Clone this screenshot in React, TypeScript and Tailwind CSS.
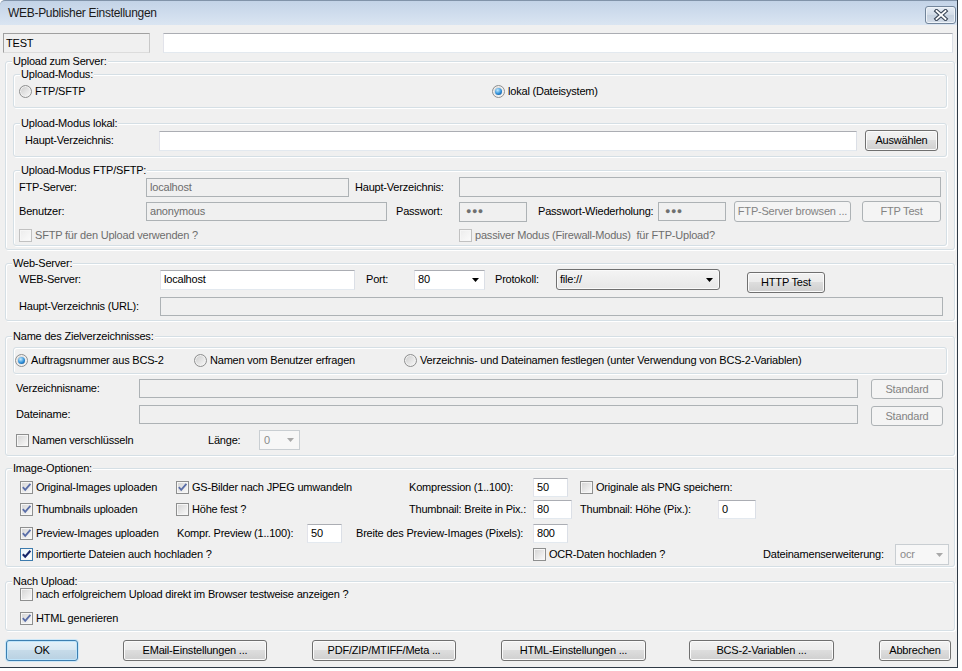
import React from "react";

type Kids = { children?: React.ReactNode };

function Group({ title, className, children }: { title?: string; className: string } & Kids) {
  return (
    <div
      className={`border border-[#d5dfe5] rounded-[3px] shadow-[inset_1px_1px_0_#ffffff,1px_1px_0_#ffffff] flex flex-col shrink-0 ${className}`}
    >
      {title && (
        <div className="-mt-[8px] ml-[6px] px-[1px] h-[14px] leading-[14px] w-fit bg-[#f0f0f0] whitespace-nowrap">
          {title}
        </div>
      )}
      {children}
    </div>
  );
}

function Input({ cls, value, disabled, dots }: { cls: string; value?: string; disabled?: boolean; dots?: boolean }) {
  const st = disabled
    ? "bg-[#f0f0f0] border-[#adb2b5] text-[#6d6d6d]"
    : "bg-white border-[#e3e9ef] border-t-[#abadb3] border-l-[#e2e3ea] border-r-[#dbdfe6] text-black";
  return (
    <div className={`border flex items-center pl-[3px] whitespace-nowrap shrink-0 ${st} ${cls}`}>
      {dots ? <span className="text-[9px] tracking-[0.5px] pl-[3px] text-[#707070]">●●●</span> : value}
    </div>
  );
}

function Btn({ label, cls, disabled, def }: { label: string; cls: string; disabled?: boolean; def?: boolean }) {
  const st = disabled
    ? "border-[#adb2b5] bg-[#f4f4f4] text-[#838383]"
    : def
    ? "border-[#3c7fb1] bg-[linear-gradient(#e5f1f9_0%,#d7e7f2_50%,#c6dbe9_50%,#b9d1e2_100%)] shadow-[inset_0_0_0_1px_#bfe4fa,0_0_0_1px_#cde7f7]"
    : "border-[#707070] bg-[linear-gradient(#f2f2f2_0%,#ebebeb_50%,#dddddd_50%,#cfcfcf_100%)] shadow-[inset_0_0_0_1px_#fbfbfb]";
  return (
    <button
      type="button"
      className={`rounded-[3px] border flex items-center justify-center shrink-0 whitespace-nowrap ${st} ${cls}`}
    >
      {label}
    </button>
  );
}

function Arrow({ color = "#000" }: { color?: string }) {
  return (
    <svg width="7" height="4" viewBox="0 0 7 4" className="shrink-0">
      <path d="M0 0 H7 L3.5 4 Z" fill={color} />
    </svg>
  );
}

function Select({ cls, value, variant }: { cls: string; value: string; variant: "edit" | "list" | "disabled" }) {
  if (variant === "list")
    return (
      <div
        className={`rounded-[3px] border border-[#707070] bg-[linear-gradient(#f4f4f4,#e8e8e8)] shadow-[inset_0_0_0_1px_#fafafa] flex items-center justify-between pl-[3px] pr-[6px] shrink-0 ${cls}`}
      >
        <span>{value}</span>
        <Arrow />
      </div>
    );
  if (variant === "disabled")
    return (
      <div
        className={`border border-[#c9ced2] bg-[#f7f7f7] flex items-center justify-between pl-[4px] pr-[5px] shrink-0 text-[#8a8a8a] ${cls}`}
      >
        <span>{value}</span>
        <Arrow color="#a9a9a9" />
      </div>
    );
  return (
    <div
      className={`border bg-white border-[#e3e9ef] border-t-[#abadb3] border-l-[#e2e3ea] border-r-[#dbdfe6] flex items-center justify-between pl-[3px] pr-[5px] shrink-0 ${cls}`}
    >
      <span>{value}</span>
      <Arrow />
    </div>
  );
}

function Check({ checked, disabled, hot }: { checked?: boolean; disabled?: boolean; hot?: boolean }) {
  const box = disabled
    ? "border-[#c1c1c1] bg-[linear-gradient(135deg,#ececec,#fbfbfb)]"
    : hot
    ? "border-[#3d7bad] bg-[linear-gradient(135deg,#e5f4fc,#ffffff)]"
    : "border-[#8e8f8f] bg-[linear-gradient(135deg,#d3d3d3,#fbfbfb)]";
  return (
    <span className={`w-[13px] h-[13px] shrink-0 border flex items-center justify-center shadow-[inset_0_0_0_1px_#f6f6f6] ${box}`}>
      {checked && (
        <svg width="11" height="11" viewBox="0 0 11 11">
          <path
            d="M1.8 5.2 L4.2 7.8 L9.4 1.8"
            fill="none"
            stroke={hot ? "#15246a" : "#5a6ea8"}
            strokeWidth={hot ? 2.1 : 1.8}
          />
        </svg>
      )}
    </span>
  );
}

function Radio({ checked }: { checked?: boolean }) {
  return (
    <span className="w-[13px] h-[13px] rounded-full border border-[#8e8f8f] bg-[linear-gradient(135deg,#cbcbcb,#fafafa)] shadow-[inset_0_0_0_1px_#f2f2f2] flex items-center justify-center shrink-0">
      {checked && (
        <span className="w-[7px] h-[7px] rounded-full bg-[radial-gradient(circle_at_38%_32%,#c4ebff,#2e8fd8_55%,#0c3c78)]" />
      )}
    </span>
  );
}

function CL({ label, checked, disabled, hot, cls = "" }: { label: string; checked?: boolean; disabled?: boolean; hot?: boolean; cls?: string }) {
  return (
    <div className={`flex items-center gap-[3px] whitespace-pre shrink-0 ${disabled ? "text-[#6d6d6d]" : ""} ${cls}`}>
      <Check checked={checked} disabled={disabled} hot={hot} />
      <span>{label}</span>
    </div>
  );
}

function RL({ label, checked, cls = "" }: { label: string; checked?: boolean; cls?: string }) {
  return (
    <div className={`flex items-center gap-[3px] whitespace-nowrap shrink-0 ${cls}`}>
      <Radio checked={checked} />
      <span>{label}</span>
    </div>
  );
}

function L({ children, cls = "" }: { cls?: string } & Kids) {
  return <div className={`whitespace-nowrap shrink-0 ${cls}`}>{children}</div>;
}

function CloseBtn() {
  return (
    <div className="mt-[5px] mr-[1px] w-[31px] h-[18px] rounded-[3px] border border-[#72859b] bg-[linear-gradient(#e6edf5,#d2dce8_50%,#c5d1df_50%,#d3dce8)] shadow-[inset_0_0_0_1px_#eef3f8] flex items-center justify-center">
      <svg width="16" height="12" viewBox="0 0 16 12">
        <path d="M3.5 2 L12.5 10 M12.5 2 L3.5 10" stroke="#3a4657" strokeWidth="4" strokeLinecap="square" />
        <path d="M3.5 2 L12.5 10 M12.5 2 L3.5 10" stroke="#ffffff" strokeWidth="1.8" strokeLinecap="square" />
      </svg>
    </div>
  );
}

export default function App() {
  return (
    <div className="w-[962px] h-[671px] bg-white font-['Liberation_Sans',Arial,sans-serif] text-[11px] leading-[13px] tracking-[-0.2px] text-black">
      <div className="w-[958px] h-[668px] border-r border-b border-[#2f3a46] flex flex-col">
        {/* Title bar */}
        <div className="h-[25px] shrink-0 flex justify-between items-start bg-[linear-gradient(#c3d3e7,#dae5f2)] rounded-tl-[5px] border-t border-[#8193a9]">
          <div className="pl-[8px] pt-[5px] text-[12px] leading-[15px] tracking-[-0.3px] text-[#1b1b1b]">
            WEB-Publisher Einstellungen
          </div>
          <CloseBtn />
        </div>

        {/* Client */}
        <div className="flex-1 bg-[#f0f0f0] flex flex-col">
          {/* TEST row */}
          <div className="mt-[8px] flex h-[20px] shrink-0">
            <div className="ml-[3px] w-[147px] h-[20px] border border-[#a0a0a0] border-b-[#dcdcdc] border-r-[#c8c8c8] flex items-center pl-[2px]">
              TEST
            </div>
            <Input cls="ml-[13px] w-[790px] h-[20px]" />
          </div>

          {/* Upload zum Server */}
          <Group title="Upload zum Server:" className="mt-[8px] ml-[5px] w-[950px] h-[189px]">
            <Group title="Upload-Modus:" className="mt-[6px] ml-[7px] w-[934px] h-[34px]">
              <div className="mt-[4px] ml-[5px] flex items-center h-[13px]">
                <RL label="FTP/SFTP" cls="w-[473px]" />
                <RL label="lokal (Dateisystem)" checked />
              </div>
            </Group>
            <Group title="Upload-Modus lokal:" className="mt-[15px] ml-[7px] w-[934px] h-[34px]">
              <div className="flex items-center h-[21px]">
                <L cls="ml-[11px] w-[134px]">Haupt-Verzeichnis:</L>
                <Input cls="w-[698px] h-[20px]" />
                <Btn label="Auswählen" cls="ml-[8px] w-[73px] h-[21px]" />
              </div>
            </Group>
            <Group title="Upload-Modus FTP/SFTP:" className="mt-[13px] ml-[7px] w-[934px] h-[76px]">
              <div className="flex items-center h-[20px]">
                <L cls="ml-[5px] w-[127px]">FTP-Server:</L>
                <Input cls="w-[203px] h-[19px]" value="localhost" disabled />
                <L cls="w-[110px] pl-[6px]">Haupt-Verzeichnis:</L>
                <Input cls="w-[482px] h-[20px]" disabled />
              </div>
              <div className="mt-[4px] flex items-center h-[21px]">
                <L cls="ml-[5px] w-[127px]">Benutzer:</L>
                <Input cls="w-[241px] h-[19px]" value="anonymous" disabled />
                <L cls="w-[72px] pl-[9px]">Passwort:</L>
                <Input cls="w-[68px] h-[20px]" disabled dots />
                <L cls="w-[131px] pl-[11px]">Passwort-Wiederholung:</L>
                <Input cls="w-[68px] h-[19px]" disabled dots />
                <Btn label="FTP-Server browsen ..." cls="ml-[8px] w-[117px] h-[21px]" disabled />
                <Btn label="FTP Test" cls="ml-[11px] w-[79px] h-[21px]" disabled />
              </div>
              <div className="mt-[7px] ml-[5px] flex items-center h-[13px]">
                <CL label="SFTP für den Upload verwenden ?" disabled cls="w-[440px]" />
                <CL label="passiver Modus (Firewall-Modus)  für FTP-Upload?" disabled />
              </div>
            </Group>
          </Group>

          {/* Web-Server */}
          <Group title="Web-Server:" className="mt-[13px] ml-[5px] w-[950px] h-[58px]">
            <div className="-mt-[1px] flex items-center h-[21px]">
              <L cls="ml-[13px] w-[141px]">WEB-Server:</L>
              <Input cls="w-[195px] h-[20px]" value="localhost" />
              <L cls="w-[59px] pl-[11px]">Port:</L>
              <Select cls="w-[71px] h-[20px]" value="80" variant="edit" />
              <L cls="w-[71px] pl-[10px]">Protokoll:</L>
              <Select cls="w-[164px] h-[21px]" value="file://" variant="list" />
              <Btn label="HTTP Test" cls="ml-[27px] w-[78px] h-[21px] self-start mt-[3px]" />
            </div>
            <div className="mt-[7px] flex items-center h-[19px]">
              <L cls="ml-[13px] w-[141px]">Haupt-Verzeichnis (URL):</L>
              <Input cls="w-[783px] h-[19px]" disabled />
            </div>
          </Group>

          {/* Name des Zielverzeichnisses */}
          <Group title="Name des Zielverzeichnisses:" className="mt-[15px] ml-[5px] w-[950px] h-[120px]">
            <Group className="mt-[4px] ml-[7px] w-[934px] h-[27px]">
              <div className="h-full ml-[1px] flex items-center">
                <RL label="Auftragsnummer aus BCS-2" checked cls="w-[179px]" />
                <RL label="Namen vom Benutzer erfragen" cls="w-[210px]" />
                <RL label="Verzeichnis- und Dateinamen festlegen (unter Verwendung von BCS-2-Variablen)" />
              </div>
            </Group>
            <div className="mt-[5px] flex items-start h-[20px]">
              <L cls="ml-[10px] w-[123px] h-[19px] flex items-center">Verzeichnisname:</L>
              <Input cls="w-[719px] h-[19px]" disabled />
              <Btn label="Standard" cls="ml-[13px] w-[72px] h-[20px]" disabled />
            </div>
            <div className="mt-[6px] flex items-start h-[21px]">
              <L cls="ml-[10px] w-[123px] h-[19px] flex items-center">Dateiname:</L>
              <Input cls="w-[719px] h-[19px]" disabled />
              <Btn label="Standard" cls="ml-[13px] mt-[1px] w-[72px] h-[20px]" disabled />
            </div>
            <div className="mt-[4px] flex items-center h-[20px]">
              <CL label="Namen verschlüsseln" cls="ml-[10px] w-[192px]" />
              <L cls="w-[51px]">Länge:</L>
              <Select cls="w-[41px] h-[20px]" value="0" variant="disabled" />
            </div>
          </Group>

          {/* Image-Optionen */}
          <Group title="Image-Optionen:" className="mt-[12px] ml-[5px] w-[950px] h-[99px]">
            <div className="mt-[3px] ml-[14px] flex items-center h-[19px]">
              <CL label="Original-Images uploaden" checked cls="w-[156px]" />
              <CL label="GS-Bilder nach JPEG umwandeln" checked cls="w-[233px]" />
              <L cls="w-[124px]">Kompression (1..100):</L>
              <Input cls="w-[35px] h-[19px]" value="50" />
              <CL label="Originale als PNG speichern:" cls="ml-[12px]" />
            </div>
            <div className="mt-[3px] ml-[14px] flex items-center h-[19px]">
              <CL label="Thumbnails uploaden" checked cls="w-[156px]" />
              <CL label="Höhe fest ?" cls="w-[233px]" />
              <L cls="w-[124px]">Thumbnail: Breite in Pix.:</L>
              <Input cls="w-[39px] h-[19px]" value="80" />
              <L cls="ml-[8px] w-[138px]">Thumbnail: Höhe (Pix.):</L>
              <Input cls="w-[38px] h-[19px]" value="0" />
            </div>
            <div className="mt-[5px] ml-[14px] flex items-center h-[19px]">
              <CL label="Preview-Images uploaden" checked cls="w-[157px]" />
              <L cls="w-[130px]">Kompr. Preview (1..100):</L>
              <Input cls="w-[35px] h-[19px]" value="50" />
              <L cls="w-[191px] pl-[14px]">Breite des Preview-Images (Pixels):</L>
              <Input cls="w-[35px] h-[19px]" value="800" />
            </div>
            <div className="mt-[1px] ml-[14px] flex items-center h-[21px]">
              <CL label="importierte Dateien auch hochladen ?" checked hot cls="w-[513px]" />
              <CL label="OCR-Daten hochladen ?" cls="w-[230px]" />
              <L cls="w-[132px]">Dateinamenserweiterung:</L>
              <Select cls="w-[54px] h-[21px]" value="ocr" variant="disabled" />
            </div>
          </Group>

          {/* Nach Upload */}
          <Group title="Nach Upload:" className="mt-[14px] ml-[5px] w-[950px] h-[50px]">
            <div className="ml-[14px] flex items-center h-[13px]">
              <CL label="nach erfolgreichem Upload direkt im Browser testweise anzeigen ?" />
            </div>
            <div className="mt-[11px] ml-[14px] flex items-center h-[13px]">
              <CL label="HTML generieren" checked />
            </div>
          </Group>

          {/* Buttons */}
          <div className="mt-[9px] flex h-[21px] shrink-0">
            <Btn label="OK" def cls="ml-[6px] w-[72px] h-[21px]" />
            <Btn label="EMail-Einstellungen ..." cls="ml-[45px] w-[144px] h-[21px]" />
            <Btn label="PDF/ZIP/MTIFF/Meta ..." cls="ml-[45px] w-[144px] h-[21px]" />
            <Btn label="HTML-Einstellungen ..." cls="ml-[45px] w-[145px] h-[21px]" />
            <Btn label="BCS-2-Variablen ..." cls="ml-[43px] w-[145px] h-[21px]" />
            <Btn label="Abbrechen" cls="ml-[45px] w-[72px] h-[21px]" />
          </div>
        </div>
      </div>
    </div>
  );
}
